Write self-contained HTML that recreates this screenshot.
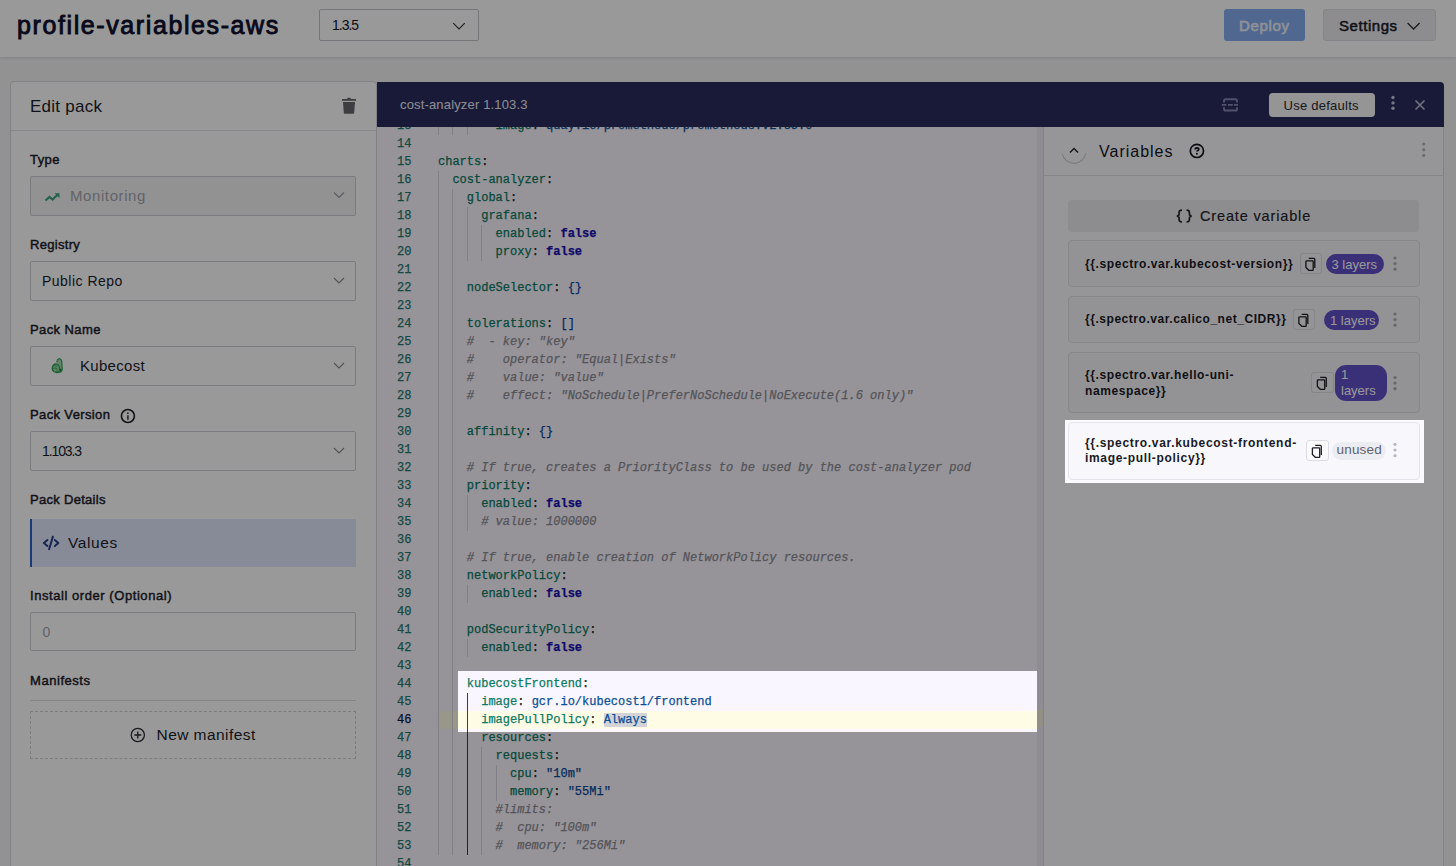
<!DOCTYPE html>
<html><head><meta charset="utf-8">
<style>
*{box-sizing:border-box;margin:0;padding:0}
html,body{width:1456px;height:866px;overflow:hidden}
body{font-family:"Liberation Sans",sans-serif;background:#f3f3f6;position:relative}
.t{position:absolute;white-space:nowrap}
.b{position:absolute}
.ln{position:absolute;left:0px;width:34.5px;text-align:right;color:#237a6e;height:18px}
.ln.cur{color:#0b1650}
.cl{position:absolute;left:61px;white-space:pre;height:18px;color:#222}
.g{position:absolute;width:1px;height:18px}
.code{font-family:"Liberation Mono",monospace;font-size:12px;line-height:18px;-webkit-text-stroke:0.25px currentColor}
.k{font-weight:normal;color:#0a7a62}
.p{color:#222}
.f{font-weight:bold;color:#1a10b0}
.br{color:#0a48a0}
.s{color:#0a4a9a}
.v{color:#0b4f96}
.c{color:#8d8d94;font-style:italic}
.sel2{background:#d4d4d8}
</style></head><body>
<div class="b" style="left:0px;top:0px;width:1456px;height:57px;background:#ffffff;box-shadow:0 1px 3px rgba(0,0,0,0.12)"></div><div class="t" style="left:17.0px;top:12.6px;font-size:25px;line-height:25px;font-weight:normal;color:#0f1030;letter-spacing:1.6px;font-family:'Liberation Sans';-webkit-text-stroke:0.9px #0f1030;">profile-variables-aws</div><div class="b" style="left:319px;top:9px;width:160px;height:32px;border:1px solid #c4c4cc;border-radius:2px;background:#fff"></div><div class="t" style="left:332.0px;top:17.6px;font-size:14px;line-height:14px;font-weight:normal;color:#15151f;letter-spacing:-1.0px;font-family:'Liberation Sans';">1.3.5</div><div class="b" style="left:1224px;top:9px;width:81px;height:32px;background:#86aef0;border-radius:3px"></div><div class="t" style="left:1239.0px;top:17.8px;font-size:15px;line-height:15px;font-weight:normal;color:#eef2fb;letter-spacing:0.66px;font-family:'Liberation Sans';-webkit-text-stroke:0.55px #eef2fb;">Deploy</div><div class="b" style="left:1323px;top:9px;width:113px;height:32px;background:#ececf0;border:1px solid #dedee4;border-radius:3px"></div><div class="t" style="left:1339.0px;top:17.8px;font-size:15px;line-height:15px;font-weight:normal;color:#1d1d2a;letter-spacing:0.55px;font-family:'Liberation Sans';-webkit-text-stroke:0.55px #1d1d2a;">Settings</div><div class="b" style="left:10px;top:81px;width:367px;height:800px;background:#ffffff;border:1px solid #d8d8e0;border-radius:4px"></div><div class="t" style="left:30.0px;top:97.6px;font-size:17px;line-height:17px;font-weight:normal;color:#1d1d2a;letter-spacing:0.25px;font-family:'Liberation Sans';">Edit pack</div><div class="b" style="left:11px;top:130px;width:365px;height:1px;background:#e2e2e8"></div><div class="t" style="left:30.0px;top:153.0px;font-size:13px;line-height:13px;font-weight:normal;color:#1d1d2a;letter-spacing:0.43px;font-family:'Liberation Sans';-webkit-text-stroke:0.45px #1d1d2a;">Type</div><div class="b" style="left:30px;top:176px;width:326px;height:40px;border:1px solid #cfcfd6;border-radius:2px;background:#f3f3f6"></div><div class="t" style="left:70.0px;top:188.3px;font-size:15px;line-height:15px;font-weight:normal;color:#a6a6ae;letter-spacing:0.59px;font-family:'Liberation Sans';">Monitoring</div><div class="t" style="left:30.0px;top:238.2px;font-size:13px;line-height:13px;font-weight:normal;color:#1d1d2a;letter-spacing:0.3px;font-family:'Liberation Sans';-webkit-text-stroke:0.45px #1d1d2a;">Registry</div><div class="b" style="left:30px;top:261px;width:326px;height:40px;border:1px solid #cfcfd6;border-radius:2px;background:#fff"></div><div class="t" style="left:42.0px;top:273.7px;font-size:14px;line-height:14px;font-weight:normal;color:#1d1d2a;letter-spacing:0.48px;font-family:'Liberation Sans';">Public Repo</div><div class="t" style="left:30.0px;top:322.9px;font-size:13px;line-height:13px;font-weight:normal;color:#1d1d2a;letter-spacing:0.4px;font-family:'Liberation Sans';-webkit-text-stroke:0.45px #1d1d2a;">Pack Name</div><div class="b" style="left:30px;top:346px;width:326px;height:40px;border:1px solid #cfcfd6;border-radius:2px;background:#fff"></div><div class="t" style="left:80.0px;top:358.4px;font-size:15px;line-height:15px;font-weight:normal;color:#1d1d2a;letter-spacing:0.3px;font-family:'Liberation Sans';">Kubecost</div><div class="t" style="left:30.0px;top:408.1px;font-size:13px;line-height:13px;font-weight:normal;color:#1d1d2a;letter-spacing:0.37px;font-family:'Liberation Sans';-webkit-text-stroke:0.45px #1d1d2a;">Pack Version</div><div class="b" style="left:30px;top:431px;width:326px;height:40px;border:1px solid #cfcfd6;border-radius:2px;background:#fff"></div><div class="t" style="left:42.0px;top:443.6px;font-size:14px;line-height:14px;font-weight:normal;color:#1d1d2a;letter-spacing:-1.1px;font-family:'Liberation Sans';">1.103.3</div><div class="t" style="left:30.0px;top:493.0px;font-size:13px;line-height:13px;font-weight:normal;color:#1d1d2a;letter-spacing:0.29px;font-family:'Liberation Sans';-webkit-text-stroke:0.45px #1d1d2a;">Pack Details</div><div class="b" style="left:30px;top:519px;width:326px;height:48px;background:#e2e8fc;border-left:2px solid #2d5fc4"></div><div class="t" style="left:68.0px;top:535.1px;font-size:15.5px;line-height:15.5px;font-weight:normal;color:#1d1d2a;letter-spacing:0.6px;font-family:'Liberation Sans';">Values</div><div class="t" style="left:30.0px;top:589.4px;font-size:13px;line-height:13px;font-weight:normal;color:#1d1d2a;letter-spacing:0.56px;font-family:'Liberation Sans';-webkit-text-stroke:0.45px #1d1d2a;">Install order (Optional)</div><div class="b" style="left:30px;top:612px;width:326px;height:39px;border:1px solid #cfcfd6;border-radius:2px;background:#fff"></div><div class="t" style="left:42.5px;top:625.1px;font-size:14px;line-height:14px;font-weight:normal;color:#a5a5ad;letter-spacing:0px;font-family:'Liberation Sans';">0</div><div class="t" style="left:30.0px;top:674.3px;font-size:13px;line-height:13px;font-weight:normal;color:#1d1d2a;letter-spacing:0.55px;font-family:'Liberation Sans';-webkit-text-stroke:0.45px #1d1d2a;">Manifests</div><div class="b" style="left:30px;top:700px;width:326px;height:1px;background:#dcdce2"></div><div class="b" style="left:30px;top:711px;width:326px;height:48px;border:1px dashed #d0d0d8"></div><div class="t" style="left:156.5px;top:727.4px;font-size:15.5px;line-height:15.5px;font-weight:normal;color:#1d1d2a;letter-spacing:0.45px;font-family:'Liberation Sans';">New manifest</div><div class="b" style="left:377px;top:82px;width:1067px;height:800px;background:#faf6ff;border-top-right-radius:4px"></div><div class="b" style="left:377px;top:82px;width:1067px;height:45px;background:#2a2b5e;border-top-right-radius:4px"></div><div class="t" style="left:400.0px;top:98.1px;font-size:13px;line-height:13px;font-weight:normal;color:#ececf6;letter-spacing:0.16px;font-family:'Liberation Sans';">cost-analyzer 1.103.3</div><div class="b" style="left:1269px;top:93px;width:106px;height:24px;background:#f9f9fb;border-radius:4px"></div><div class="t" style="left:1283.5px;top:98.5px;font-size:13px;line-height:13px;font-weight:normal;color:#2a2a30;letter-spacing:0.25px;font-family:'Liberation Sans';">Use defaults</div><div class="b code" style="left:377px;top:127px;width:660px;height:739px;overflow:hidden"><div class="b" style="left:61px;top:584px;width:599px;height:18px;background:#fffce6"></div>
<div class="g" style="left:61.0px;top:-10px;background:#d6d6dc"></div>
<div class="g" style="left:75.4px;top:-10px;background:#d6d6dc"></div>
<div class="g" style="left:89.8px;top:-10px;background:#d6d6dc"></div>
<div class="ln" style="top:-10px">13</div>
<div class="cl" style="top:-10px">        <b class="k">image</b><span class="p">:</span> <span class="v">quay.io/prometheus/prometheus:v2.35.0</span></div>
<div class="ln" style="top:8px">14</div>
<div class="cl" style="top:8px"></div>
<div class="ln" style="top:26px">15</div>
<div class="cl" style="top:26px"><b class="k">charts</b><span class="p">:</span></div>
<div class="g" style="left:61.0px;top:44px;background:#d6d6dc"></div>
<div class="ln" style="top:44px">16</div>
<div class="cl" style="top:44px">  <b class="k">cost-analyzer</b><span class="p">:</span></div>
<div class="g" style="left:61.0px;top:62px;background:#d6d6dc"></div>
<div class="g" style="left:75.4px;top:62px;background:#d6d6dc"></div>
<div class="ln" style="top:62px">17</div>
<div class="cl" style="top:62px">    <b class="k">global</b><span class="p">:</span></div>
<div class="g" style="left:61.0px;top:80px;background:#d6d6dc"></div>
<div class="g" style="left:75.4px;top:80px;background:#d6d6dc"></div>
<div class="g" style="left:89.8px;top:80px;background:#d6d6dc"></div>
<div class="ln" style="top:80px">18</div>
<div class="cl" style="top:80px">      <b class="k">grafana</b><span class="p">:</span></div>
<div class="g" style="left:61.0px;top:98px;background:#d6d6dc"></div>
<div class="g" style="left:75.4px;top:98px;background:#d6d6dc"></div>
<div class="g" style="left:89.8px;top:98px;background:#d6d6dc"></div>
<div class="g" style="left:104.2px;top:98px;background:#d6d6dc"></div>
<div class="ln" style="top:98px">19</div>
<div class="cl" style="top:98px">        <b class="k">enabled</b><span class="p">:</span> <b class="f">false</b></div>
<div class="g" style="left:61.0px;top:116px;background:#d6d6dc"></div>
<div class="g" style="left:75.4px;top:116px;background:#d6d6dc"></div>
<div class="g" style="left:89.8px;top:116px;background:#d6d6dc"></div>
<div class="g" style="left:104.2px;top:116px;background:#d6d6dc"></div>
<div class="ln" style="top:116px">20</div>
<div class="cl" style="top:116px">        <b class="k">proxy</b><span class="p">:</span> <b class="f">false</b></div>
<div class="g" style="left:61.0px;top:134px;background:#d6d6dc"></div>
<div class="g" style="left:75.4px;top:134px;background:#d6d6dc"></div>
<div class="ln" style="top:134px">21</div>
<div class="cl" style="top:134px"></div>
<div class="g" style="left:61.0px;top:152px;background:#d6d6dc"></div>
<div class="g" style="left:75.4px;top:152px;background:#d6d6dc"></div>
<div class="ln" style="top:152px">22</div>
<div class="cl" style="top:152px">    <b class="k">nodeSelector</b><span class="p">:</span> <span class="br">{}</span></div>
<div class="g" style="left:61.0px;top:170px;background:#d6d6dc"></div>
<div class="g" style="left:75.4px;top:170px;background:#d6d6dc"></div>
<div class="ln" style="top:170px">23</div>
<div class="cl" style="top:170px"></div>
<div class="g" style="left:61.0px;top:188px;background:#d6d6dc"></div>
<div class="g" style="left:75.4px;top:188px;background:#d6d6dc"></div>
<div class="ln" style="top:188px">24</div>
<div class="cl" style="top:188px">    <b class="k">tolerations</b><span class="p">:</span> <span class="br">[]</span></div>
<div class="g" style="left:61.0px;top:206px;background:#d6d6dc"></div>
<div class="g" style="left:75.4px;top:206px;background:#d6d6dc"></div>
<div class="ln" style="top:206px">25</div>
<div class="cl" style="top:206px">    <i class="c">#  - key: &quot;key&quot;</i></div>
<div class="g" style="left:61.0px;top:224px;background:#d6d6dc"></div>
<div class="g" style="left:75.4px;top:224px;background:#d6d6dc"></div>
<div class="ln" style="top:224px">26</div>
<div class="cl" style="top:224px">    <i class="c">#    operator: &quot;Equal|Exists&quot;</i></div>
<div class="g" style="left:61.0px;top:242px;background:#d6d6dc"></div>
<div class="g" style="left:75.4px;top:242px;background:#d6d6dc"></div>
<div class="ln" style="top:242px">27</div>
<div class="cl" style="top:242px">    <i class="c">#    value: &quot;value&quot;</i></div>
<div class="g" style="left:61.0px;top:260px;background:#d6d6dc"></div>
<div class="g" style="left:75.4px;top:260px;background:#d6d6dc"></div>
<div class="ln" style="top:260px">28</div>
<div class="cl" style="top:260px">    <i class="c">#    effect: &quot;NoSchedule|PreferNoSchedule|NoExecute(1.6 only)&quot;</i></div>
<div class="g" style="left:61.0px;top:278px;background:#d6d6dc"></div>
<div class="g" style="left:75.4px;top:278px;background:#d6d6dc"></div>
<div class="ln" style="top:278px">29</div>
<div class="cl" style="top:278px"></div>
<div class="g" style="left:61.0px;top:296px;background:#d6d6dc"></div>
<div class="g" style="left:75.4px;top:296px;background:#d6d6dc"></div>
<div class="ln" style="top:296px">30</div>
<div class="cl" style="top:296px">    <b class="k">affinity</b><span class="p">:</span> <span class="br">{}</span></div>
<div class="g" style="left:61.0px;top:314px;background:#d6d6dc"></div>
<div class="g" style="left:75.4px;top:314px;background:#d6d6dc"></div>
<div class="ln" style="top:314px">31</div>
<div class="cl" style="top:314px"></div>
<div class="g" style="left:61.0px;top:332px;background:#d6d6dc"></div>
<div class="g" style="left:75.4px;top:332px;background:#d6d6dc"></div>
<div class="ln" style="top:332px">32</div>
<div class="cl" style="top:332px">    <i class="c"># If true, creates a PriorityClass to be used by the cost-analyzer pod</i></div>
<div class="g" style="left:61.0px;top:350px;background:#d6d6dc"></div>
<div class="g" style="left:75.4px;top:350px;background:#d6d6dc"></div>
<div class="ln" style="top:350px">33</div>
<div class="cl" style="top:350px">    <b class="k">priority</b><span class="p">:</span></div>
<div class="g" style="left:61.0px;top:368px;background:#d6d6dc"></div>
<div class="g" style="left:75.4px;top:368px;background:#d6d6dc"></div>
<div class="g" style="left:89.8px;top:368px;background:#d6d6dc"></div>
<div class="ln" style="top:368px">34</div>
<div class="cl" style="top:368px">      <b class="k">enabled</b><span class="p">:</span> <b class="f">false</b></div>
<div class="g" style="left:61.0px;top:386px;background:#d6d6dc"></div>
<div class="g" style="left:75.4px;top:386px;background:#d6d6dc"></div>
<div class="g" style="left:89.8px;top:386px;background:#d6d6dc"></div>
<div class="ln" style="top:386px">35</div>
<div class="cl" style="top:386px">      <i class="c"># value: 1000000</i></div>
<div class="g" style="left:61.0px;top:404px;background:#d6d6dc"></div>
<div class="g" style="left:75.4px;top:404px;background:#d6d6dc"></div>
<div class="ln" style="top:404px">36</div>
<div class="cl" style="top:404px"></div>
<div class="g" style="left:61.0px;top:422px;background:#d6d6dc"></div>
<div class="g" style="left:75.4px;top:422px;background:#d6d6dc"></div>
<div class="ln" style="top:422px">37</div>
<div class="cl" style="top:422px">    <i class="c"># If true, enable creation of NetworkPolicy resources.</i></div>
<div class="g" style="left:61.0px;top:440px;background:#d6d6dc"></div>
<div class="g" style="left:75.4px;top:440px;background:#d6d6dc"></div>
<div class="ln" style="top:440px">38</div>
<div class="cl" style="top:440px">    <b class="k">networkPolicy</b><span class="p">:</span></div>
<div class="g" style="left:61.0px;top:458px;background:#d6d6dc"></div>
<div class="g" style="left:75.4px;top:458px;background:#d6d6dc"></div>
<div class="g" style="left:89.8px;top:458px;background:#d6d6dc"></div>
<div class="ln" style="top:458px">39</div>
<div class="cl" style="top:458px">      <b class="k">enabled</b><span class="p">:</span> <b class="f">false</b></div>
<div class="g" style="left:61.0px;top:476px;background:#d6d6dc"></div>
<div class="g" style="left:75.4px;top:476px;background:#d6d6dc"></div>
<div class="ln" style="top:476px">40</div>
<div class="cl" style="top:476px"></div>
<div class="g" style="left:61.0px;top:494px;background:#d6d6dc"></div>
<div class="g" style="left:75.4px;top:494px;background:#d6d6dc"></div>
<div class="ln" style="top:494px">41</div>
<div class="cl" style="top:494px">    <b class="k">podSecurityPolicy</b><span class="p">:</span></div>
<div class="g" style="left:61.0px;top:512px;background:#d6d6dc"></div>
<div class="g" style="left:75.4px;top:512px;background:#d6d6dc"></div>
<div class="g" style="left:89.8px;top:512px;background:#d6d6dc"></div>
<div class="ln" style="top:512px">42</div>
<div class="cl" style="top:512px">      <b class="k">enabled</b><span class="p">:</span> <b class="f">false</b></div>
<div class="g" style="left:61.0px;top:530px;background:#d6d6dc"></div>
<div class="g" style="left:75.4px;top:530px;background:#d6d6dc"></div>
<div class="ln" style="top:530px">43</div>
<div class="cl" style="top:530px"></div>
<div class="g" style="left:61.0px;top:548px;background:#d6d6dc"></div>
<div class="g" style="left:75.4px;top:548px;background:#d6d6dc"></div>
<div class="ln" style="top:548px">44</div>
<div class="cl" style="top:548px">    <b class="k">kubecostFrontend</b><span class="p">:</span></div>
<div class="g" style="left:61.0px;top:566px;background:#d6d6dc"></div>
<div class="g" style="left:75.4px;top:566px;background:#d6d6dc"></div>
<div class="g" style="left:89.8px;top:566px;background:#3b3b3b"></div>
<div class="ln" style="top:566px">45</div>
<div class="cl" style="top:566px">      <b class="k">image</b><span class="p">:</span> <span class="v">gcr.io/kubecost1/frontend</span></div>
<div class="g" style="left:61.0px;top:584px;background:#d6d6dc"></div>
<div class="g" style="left:75.4px;top:584px;background:#d6d6dc"></div>
<div class="g" style="left:89.8px;top:584px;background:#3b3b3b"></div>
<div class="ln cur" style="top:584px">46</div>
<div class="cl" style="top:584px">      <b class="k">imagePullPolicy</b><span class="p">:</span> <span class="v sel2">Always</span></div>
<div class="g" style="left:61.0px;top:602px;background:#d6d6dc"></div>
<div class="g" style="left:75.4px;top:602px;background:#d6d6dc"></div>
<div class="g" style="left:89.8px;top:602px;background:#3b3b3b"></div>
<div class="ln" style="top:602px">47</div>
<div class="cl" style="top:602px">      <b class="k">resources</b><span class="p">:</span></div>
<div class="g" style="left:61.0px;top:620px;background:#d6d6dc"></div>
<div class="g" style="left:75.4px;top:620px;background:#d6d6dc"></div>
<div class="g" style="left:89.8px;top:620px;background:#3b3b3b"></div>
<div class="g" style="left:104.2px;top:620px;background:#d6d6dc"></div>
<div class="ln" style="top:620px">48</div>
<div class="cl" style="top:620px">        <b class="k">requests</b><span class="p">:</span></div>
<div class="g" style="left:61.0px;top:638px;background:#d6d6dc"></div>
<div class="g" style="left:75.4px;top:638px;background:#d6d6dc"></div>
<div class="g" style="left:89.8px;top:638px;background:#3b3b3b"></div>
<div class="g" style="left:104.2px;top:638px;background:#d6d6dc"></div>
<div class="g" style="left:118.6px;top:638px;background:#d6d6dc"></div>
<div class="ln" style="top:638px">49</div>
<div class="cl" style="top:638px">          <b class="k">cpu</b><span class="p">:</span> <span class="s">&quot;10m&quot;</span></div>
<div class="g" style="left:61.0px;top:656px;background:#d6d6dc"></div>
<div class="g" style="left:75.4px;top:656px;background:#d6d6dc"></div>
<div class="g" style="left:89.8px;top:656px;background:#3b3b3b"></div>
<div class="g" style="left:104.2px;top:656px;background:#d6d6dc"></div>
<div class="g" style="left:118.6px;top:656px;background:#d6d6dc"></div>
<div class="ln" style="top:656px">50</div>
<div class="cl" style="top:656px">          <b class="k">memory</b><span class="p">:</span> <span class="s">&quot;55Mi&quot;</span></div>
<div class="g" style="left:61.0px;top:674px;background:#d6d6dc"></div>
<div class="g" style="left:75.4px;top:674px;background:#d6d6dc"></div>
<div class="g" style="left:89.8px;top:674px;background:#3b3b3b"></div>
<div class="g" style="left:104.2px;top:674px;background:#d6d6dc"></div>
<div class="ln" style="top:674px">51</div>
<div class="cl" style="top:674px">        <i class="c">#limits:</i></div>
<div class="g" style="left:61.0px;top:692px;background:#d6d6dc"></div>
<div class="g" style="left:75.4px;top:692px;background:#d6d6dc"></div>
<div class="g" style="left:89.8px;top:692px;background:#3b3b3b"></div>
<div class="g" style="left:104.2px;top:692px;background:#d6d6dc"></div>
<div class="ln" style="top:692px">52</div>
<div class="cl" style="top:692px">        <i class="c">#  cpu: &quot;100m&quot;</i></div>
<div class="g" style="left:61.0px;top:710px;background:#d6d6dc"></div>
<div class="g" style="left:75.4px;top:710px;background:#d6d6dc"></div>
<div class="g" style="left:89.8px;top:710px;background:#3b3b3b"></div>
<div class="g" style="left:104.2px;top:710px;background:#d6d6dc"></div>
<div class="ln" style="top:710px">53</div>
<div class="cl" style="top:710px">        <i class="c">#  memory: &quot;256Mi&quot;</i></div>
<div class="ln" style="top:728px">54</div>
<div class="cl" style="top:728px"></div></div><div class="b" style="left:1037px;top:127px;width:7px;height:739px;background:#efebf5;border-right:1px solid #dcd8e4"></div><div class="b" style="left:1037px;top:709px;width:6px;height:18px;background:#f4f1de"></div><div class="b" style="left:1044px;top:127px;width:400px;height:739px;background:#fbfafe;border-right:1px solid #d6d6de"></div><div class="b" style="left:1044px;top:175px;width:400px;height:1px;background:#e0e0e6"></div><div class="t" style="left:1099.0px;top:144.0px;font-size:16px;line-height:16px;font-weight:normal;color:#15151f;letter-spacing:1.0px;font-family:'Liberation Sans';">Variables</div><div class="b" style="left:1068px;top:200px;width:351px;height:32px;background:#ececf0;border-radius:4px"></div><div class="t" style="left:1200.0px;top:208.6px;font-size:14.5px;line-height:14.5px;font-weight:normal;color:#26262c;letter-spacing:0.85px;font-family:'Liberation Sans';-webkit-text-stroke:0.2px #26262c;">Create variable</div><div class="b" style="left:1068px;top:240px;width:352px;height:47px;background:#f6f6fa;border:1px solid #e0e0e8;border-radius:4px"></div><div class="t" style="left:1085.0px;top:257.5px;font-size:12px;line-height:12px;font-weight:bold;color:#1a1a24;letter-spacing:0.59px;font-family:'Liberation Sans';">{{.spectro.var.kubecost-version}}</div><div class="b" style="left:1300px;top:253px;width:22px;height:21px;background:#f7f7fa;border:1px solid #dcdce4;border-radius:3px"></div><div class="b" style="left:1326px;top:254px;width:58px;height:20px;background:#6250c9;border-radius:10px"></div><div class="t" style="left:1331.5px;top:257.5px;font-size:13px;line-height:13px;font-weight:normal;color:#ffffff;letter-spacing:0px;font-family:'Liberation Sans';">3 layers</div><div class="b" style="left:1068px;top:296px;width:352px;height:47px;background:#f6f6fa;border:1px solid #e0e0e8;border-radius:4px"></div><div class="t" style="left:1085.0px;top:313.3px;font-size:12px;line-height:12px;font-weight:bold;color:#1a1a24;letter-spacing:0.54px;font-family:'Liberation Sans';">{{.spectro.var.calico_net_CIDR}}</div><div class="b" style="left:1293px;top:309px;width:22px;height:21px;background:#f7f7fa;border:1px solid #dcdce4;border-radius:3px"></div><div class="b" style="left:1324px;top:310px;width:55px;height:20px;background:#6250c9;border-radius:10px"></div><div class="t" style="left:1330.0px;top:313.5px;font-size:13px;line-height:13px;font-weight:normal;color:#ffffff;letter-spacing:0px;font-family:'Liberation Sans';">1 layers</div><div class="b" style="left:1068px;top:352px;width:352px;height:61px;background:#f6f6fa;border:1px solid #e0e0e8;border-radius:4px"></div><div class="t" style="left:1085.0px;top:368.5px;font-size:12px;line-height:12px;font-weight:bold;color:#1a1a24;letter-spacing:0.6px;font-family:'Liberation Sans';">{{.spectro.var.hello-uni-</div><div class="t" style="left:1085.0px;top:385.0px;font-size:12px;line-height:12px;font-weight:bold;color:#1a1a24;letter-spacing:0.6px;font-family:'Liberation Sans';">namespace}}</div><div class="b" style="left:1311px;top:372px;width:23px;height:21px;background:#f7f7fa;border:1px solid #dcdce4;border-radius:3px"></div><div class="b" style="left:1335px;top:365px;width:52px;height:36px;background:#6250c9;border-radius:11px"></div><div class="t" style="left:1341.0px;top:367.7px;font-size:13px;line-height:13px;font-weight:normal;color:#ffffff;letter-spacing:0px;font-family:'Liberation Sans';">1</div><div class="t" style="left:1341.0px;top:384.0px;font-size:13px;line-height:13px;font-weight:normal;color:#ffffff;letter-spacing:0px;font-family:'Liberation Sans';">layers</div><div class="b" style="left:1068px;top:422px;width:352px;height:58px;background:#f7f7fc;border:1px solid #e4e4ec;border-radius:4px"></div><div class="t" style="left:1085.0px;top:436.6px;font-size:12px;line-height:12px;font-weight:bold;color:#1a1a24;letter-spacing:0.68px;font-family:'Liberation Sans';">{{.spectro.var.kubecost-frontend-</div><div class="t" style="left:1085.0px;top:452.1px;font-size:12px;line-height:12px;font-weight:bold;color:#1a1a24;letter-spacing:0.68px;font-family:'Liberation Sans';">image-pull-policy}}</div><div class="b" style="left:1306px;top:440px;width:23px;height:21px;background:#fafafd;border:1px solid #dcdce4;border-radius:3px"></div><div class="b" style="left:1332px;top:441.5px;width:54px;height:18.0px;background:#ececf3;border-radius:9px"></div><div class="t" style="left:1336.5px;top:443.1px;font-size:13.5px;line-height:13.5px;font-weight:normal;color:#62626c;letter-spacing:0.2px;font-family:'Liberation Sans';">unused</div>
<svg class="b" style="left:0;top:0;z-index:5" width="1456" height="866" viewBox="0 0 1456 866"><path d="M453.25 23.125L459 28.875L464.75 23.125" stroke="#3a3a40" fill="none" stroke-width="1.2" /><path d="M1407.6 23.0L1413.6 29.0L1419.6 23.0" stroke="#2a2a33" fill="none" stroke-width="1.3" /><path d="M342 99h14v1.8h-14z" stroke="none" fill="#68676f" stroke-width="1" /><path d="M346.8 99c.3-.8 1-1.2 2.2-1.2s1.9.4 2.2 1.2z" stroke="none" fill="#68676f" stroke-width="1" /><path d="M343 102h12l-0.8 10.9c-0.05 0.5-0.4 0.8-0.9 0.8h-8.6c-0.5 0-0.85-0.3-0.9-0.8z" stroke="none" fill="#68676f" stroke-width="1" /><path d="M45.5 200.5l4-3.6 3 2.6 4.5-4.3" stroke="#3aa57a" fill="none" stroke-width="2.2" /><path d="M54.5 193.2h5v5z" stroke="none" fill="#3aa57a" stroke-width="1" /><path d="M334.0 192.5L339 197.5L344.0 192.5" stroke="#9a9aa2" fill="none" stroke-width="1.1" /><path d="M334.0 278.0L339 283.0L344.0 278.0" stroke="#8a8a92" fill="none" stroke-width="1.1" /><path d="M57 362.5c-.2-2.2.8-3.8 2.3-3.8 1.4 0 2.3 1.4 2.5 3.4l.4 6.5c.1 1.9-.7 3.3-2.2 3.5" stroke="#2e9c50" fill="#a6e0b0" stroke-width="1.1" /><path d="M60 371.9c-2 .9-4.6.9-6.2-.3-1.5-1.1-1.9-3.1-1.4-4.7.5-1.6 1.9-2.9 3.3-3 1.6-.1 2.8 1 3.4 2.4.6 1.5.9 3.6.9 5.6z" stroke="#2e9c50" fill="#98dca6" stroke-width="1.1" /><path d="M53 368.5c1.4-.6 3.3-.4 4.6.6M53.6 366c1.2-.5 2.6-.3 3.5.5M55.5 371.5c1-.6 2.6-.6 3.8.2" stroke="#2e9c50" fill="none" stroke-width="0.9" /><circle cx="60.5" cy="369.8" r="1.1" stroke="none" fill="#1f7a3a" stroke-width="1"/><path d="M334.0 363.0L339 368.0L344.0 363.0" stroke="#8a8a92" fill="none" stroke-width="1.1" /><circle cx="127.9" cy="416" r="6.5" stroke="#1e1e26" fill="none" stroke-width="1.6"/><path d="M127.9 415.2v4.6" stroke="#3a3a42" fill="none" stroke-width="1.6" /><circle cx="127.9" cy="413.2" r="0.85" stroke="none" fill="#2a2a33" stroke-width="1"/><path d="M334.0 448.0L339 453.0L344.0 448.0" stroke="#8a8a92" fill="none" stroke-width="1.1" /><path d="M47.4 540L43.9 543 47.4 546M54.9 540L58.3 543 54.9 546M52.9 536.6L49.1 549.2" stroke="#2a3f8c" fill="none" stroke-width="2" stroke-linecap="round" stroke-linejoin="round"/><circle cx="137.8" cy="735" r="6.6" stroke="#2a2a33" fill="none" stroke-width="1.3"/><path d="M137.8 731.5v7M134.3 735h7" stroke="#2a2a33" fill="none" stroke-width="1.4" /><path d="M1224 102.5v-1.7c0-1 .8-1.6 1.6-1.6h9.8c.9 0 1.6.7 1.6 1.6v1.7M1224 107.2v1.7c0 1 .8 1.6 1.6 1.6h9.8c.9 0 1.6-.7 1.6-1.6v-1.7" stroke="#8788b4" fill="none" stroke-width="1.9" /><path d="M1221.8 104.9h4.5M1228 104.9h4.8M1233.9 104.9h4.1" stroke="#8788b4" fill="none" stroke-width="1.6" /><circle cx="1393" cy="97.5" r="1.7" stroke="none" fill="#c4c4de" stroke-width="1"/><circle cx="1393" cy="102.9" r="1.7" stroke="none" fill="#c4c4de" stroke-width="1"/><circle cx="1393" cy="108.3" r="1.7" stroke="none" fill="#c4c4de" stroke-width="1"/><path d="M1415.5 100.5l9 9M1424.5 100.5l-9 9" stroke="#c4c4de" fill="none" stroke-width="1.5" /><path d="M1062.2 153.5A12 12 0 0 0 1085.8 153.5" stroke="#cfcfd6" fill="none" stroke-width="1.2" /><path d="M1070.0 152.4L1074 148.4L1078.0 152.4" stroke="#22222a" fill="none" stroke-width="1.4" /><circle cx="1196.9" cy="150.9" r="6.6" stroke="#15151c" fill="none" stroke-width="1.7"/><path d="M1195.1 149.5c0-1.1.8-1.7 1.8-1.7s1.9.6 1.9 1.5c0 1.2-1.9 1.2-1.9 2.3" stroke="#15151c" fill="none" stroke-width="1.7" /><circle cx="1196.9" cy="153.7" r="1" stroke="none" fill="#15151c" stroke-width="1"/><circle cx="1423.7" cy="144.0" r="1.6" stroke="none" fill="#b4b4be" stroke-width="1"/><circle cx="1423.7" cy="149.7" r="1.6" stroke="none" fill="#b4b4be" stroke-width="1"/><circle cx="1423.7" cy="155.4" r="1.6" stroke="none" fill="#b4b4be" stroke-width="1"/><path d="M1182 210.2c-2 0-2.9.8-2.9 2.2v1.7c0 1.2-.7 1.9-2.3 2 1.6.1 2.3.8 2.3 2v1.7c0 1.4.9 2.2 2.9 2.2M1186.5 210.2c2 0 2.9.8 2.9 2.2v1.7c0 1.2.7 1.9 2.3 2-1.6.1-2.3.8-2.3 2v1.7c0 1.4-.9 2.2-2.9 2.2" stroke="#22222a" fill="none" stroke-width="1.7" /><path d="M1308.7 258.3h5.2c.6 0 .9.3.9.9v8.8" stroke="#1e1e26" fill="none" stroke-width="1.3" /><path d="M1306.4 260.9h6.2c.3 0 .6.3.6.6v8.2c0 .3-.3.6-.6.6h-3.8l-2.9-2.9v-5.9c0-.3.3-.6.5-.6z" stroke="#1e1e26" fill="none" stroke-width="1.3" /><circle cx="1395" cy="258.0" r="1.6" stroke="none" fill="#a8a8b4" stroke-width="1"/><circle cx="1395" cy="263.6" r="1.6" stroke="none" fill="#a8a8b4" stroke-width="1"/><circle cx="1395" cy="269.2" r="1.6" stroke="none" fill="#a8a8b4" stroke-width="1"/><path d="M1301.7 314.3h5.2c.6 0 .9.3.9.9v8.8" stroke="#1e1e26" fill="none" stroke-width="1.3" /><path d="M1299.4 316.9h6.2c.3 0 .6.3.6.6v8.2c0 .3-.3.6-.6.6h-3.8l-2.9-2.9v-5.9c0-.3.3-.6.5-.6z" stroke="#1e1e26" fill="none" stroke-width="1.3" /><circle cx="1395" cy="314.0" r="1.6" stroke="none" fill="#a8a8b4" stroke-width="1"/><circle cx="1395" cy="319.6" r="1.6" stroke="none" fill="#a8a8b4" stroke-width="1"/><circle cx="1395" cy="325.2" r="1.6" stroke="none" fill="#a8a8b4" stroke-width="1"/><path d="M1320.2 377.3h5.2c.6 0 .9.3.9.9v8.8" stroke="#1e1e26" fill="none" stroke-width="1.3" /><path d="M1317.9 379.9h6.2c.3 0 .6.3.6.6v8.2c0 .3-.3.6-.6.6h-3.8l-2.9-2.9v-5.9c0-.3.3-.6.5-.6z" stroke="#1e1e26" fill="none" stroke-width="1.3" /><circle cx="1395" cy="377.5" r="1.6" stroke="none" fill="#a8a8b4" stroke-width="1"/><circle cx="1395" cy="383.1" r="1.6" stroke="none" fill="#a8a8b4" stroke-width="1"/><circle cx="1395" cy="388.7" r="1.6" stroke="none" fill="#a8a8b4" stroke-width="1"/><path d="M1315.2 445.3h5.2c.6 0 .9.3.9.9v8.8" stroke="#1e1e26" fill="none" stroke-width="1.3" /><path d="M1312.9 447.9h6.2c.3 0 .6.3.6.6v8.2c0 .3-.3.6-.6.6h-3.8l-2.9-2.9v-5.9c0-.3.3-.6.5-.6z" stroke="#1e1e26" fill="none" stroke-width="1.3" /><circle cx="1395" cy="444.3" r="1.6" stroke="none" fill="#b8b8c4" stroke-width="1"/><circle cx="1395" cy="450.0" r="1.6" stroke="none" fill="#b8b8c4" stroke-width="1"/><circle cx="1395" cy="455.7" r="1.6" stroke="none" fill="#b8b8c4" stroke-width="1"/></svg>
<svg class="b" style="left:0;top:0;z-index:50" width="1456" height="866" viewBox="0 0 1456 866"><path fill-rule="evenodd" fill="rgba(0,0,0,0.40)" d="M0 0H1456V866H0Z M458 671H1037V732H458Z M1065 420H1424V483H1065Z"/></svg>
</body></html>
